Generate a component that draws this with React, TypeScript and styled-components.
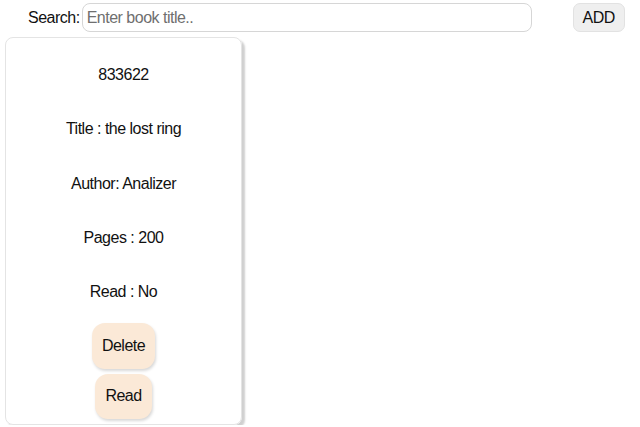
import styled, { createGlobalStyle } from "styled-components";

const GlobalStyle = createGlobalStyle`
  body {
    margin: 0;
    background: #fff;
    font-family: "Liberation Sans Narrow", "Liberation Sans", Arial, sans-serif;
    font-size: 16px;
    letter-spacing: -0.5px;
    color: #111;
  }
`;

const Page = styled.div`
  padding: 3px 0 0 5px;
`;

const SearchBar = styled.div`
  display: flex;
  align-items: center;
  height: 29px;
`;

const SearchLabel = styled.label`
  margin-left: 23px;
  margin-right: 2px;
`;

const SearchInput = styled.input`
  box-sizing: border-box;
  width: 450px;
  height: 29px;
  border: 1px solid #d6d6d6;
  border-radius: 8px;
  padding: 0 4px;
  font-family: inherit;
  font-size: 16px;
  letter-spacing: -0.5px;
  outline: none;
  &::placeholder {
    color: #6f6f6f;
  }
`;

const AddButton = styled.button`
  box-sizing: border-box;
  margin-left: 41px;
  width: 52px;
  height: 29px;
  border: 1px solid #e2e2e2;
  border-radius: 7px;
  background: #efefef;
  font-family: inherit;
  font-size: 16px;
  letter-spacing: -0.5px;
  color: #111;
`;

const List = styled.div`
  display: flex;
  margin-top: 5px;
`;

const Card = styled.div`
  box-sizing: border-box;
  width: 237px;
  height: 388px;
  border: 1px solid #e4e4e4;
  border-radius: 8px;
  box-shadow: 3px 3px 2px #d0d0d0;
  display: flex;
  flex-direction: column;
  align-items: center;
  padding-top: 28px;
`;

const Field = styled.p<{ $last?: boolean }>`
  margin: 0 0 ${(p) => (p.$last ? "22px" : "36.3px")};
  line-height: 18px;
`;

const ActionButton = styled.button`
  border: none;
  border-radius: 13px;
  background: #fbe9d7;
  box-shadow: 1px 2px 3px #d8d8d8;
  font-family: inherit;
  font-size: 16px;
  letter-spacing: -0.5px;
  color: #111;
  padding: 0 10px;
  height: 46px;
  margin-bottom: 5px;
`;

const book = {
  id: 833622,
  title: "the lost ring",
  author: "Analizer",
  pages: 200,
  read: false,
};

export default function App() {
  return (
    <>
      <GlobalStyle />
      <Page>
        <SearchBar>
          <SearchLabel>Search:</SearchLabel>
          <SearchInput placeholder="Enter book title.." />
          <AddButton>ADD</AddButton>
        </SearchBar>
        <List>
          <Card>
            <Field>{book.id}</Field>
            <Field>Title : {book.title}</Field>
            <Field>Author: {book.author}</Field>
            <Field>Pages : {book.pages}</Field>
            <Field $last>Read : {book.read ? "Yes" : "No"}</Field>
            <ActionButton>Delete</ActionButton>
            <ActionButton>Read</ActionButton>
          </Card>
        </List>
      </Page>
    </>
  );
}
